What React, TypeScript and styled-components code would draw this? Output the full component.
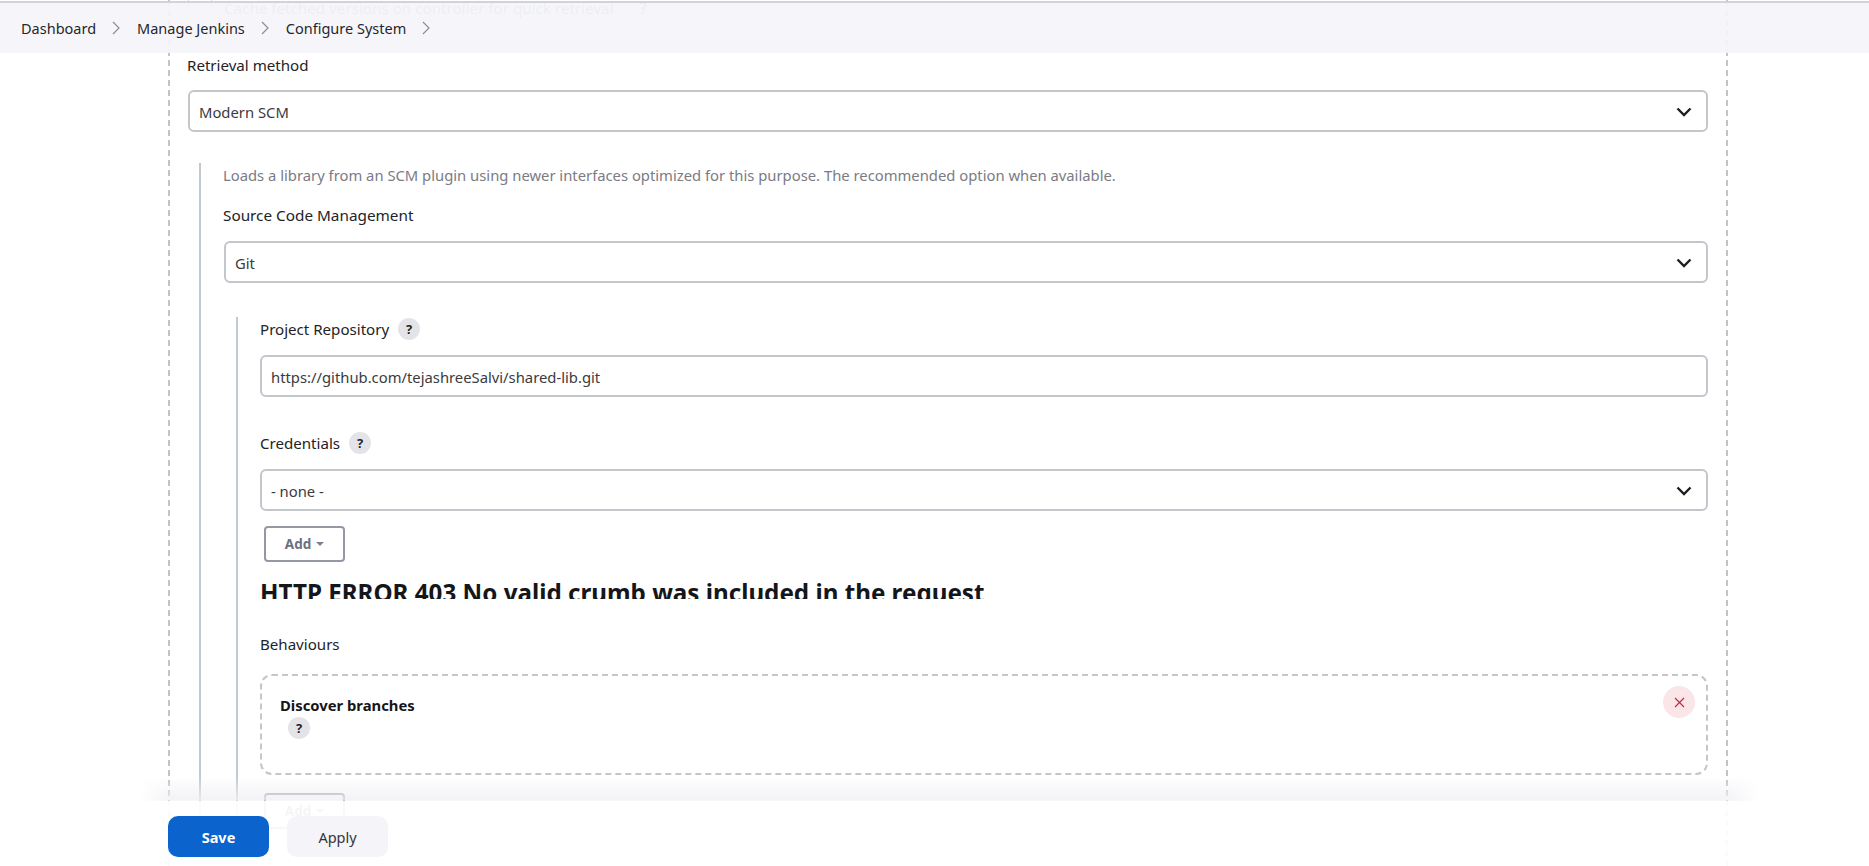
import React from "react";
import styled, { createGlobalStyle } from "styled-components";

const Global = createGlobalStyle`
  html, body { margin: 0; padding: 0; background: #fff; }
  body { font-family: "Noto Sans", "Open Sans", sans-serif; font-size: 14.8px; color: #1f2024; }
  * { box-sizing: border-box; }
`;

const Page = styled.div`
  position: relative;
  height: 866px;
  overflow: hidden;
  background: #fff;
`;

const Breadcrumbs = styled.nav`
  position: absolute;
  inset: 0 0 auto 0;
  height: 52px;
  display: flex;
  align-items: center;
  padding: 0 0 0 21px;
  border-top: 2px solid #d2d2da;
  margin-top: 1px;
  background: rgba(245, 245, 250, 0.93);
  z-index: 3;
`;

const Crumb = styled.span`
  font-size: 14.5px;
  color: #26272c;
  white-space: nowrap;
`;

const CrumbSep = styled.svg`
  width: 8px;
  height: 14px;
  margin: 0 17px 0 16px;
  fill: none;
  stroke: #8c8c94;
  stroke-width: 1.2;
`;

const Frame = styled.main`
  margin: 0 141px 0 168px;
  padding: 0 18px;
  height: 866px;
  border-left: 2px dashed #c4c4c8;
  border-right: 2px dashed #c4c4c8;
`;

const CacheRow = styled.div`
  height: 54px;
  display: flex;
  align-items: flex-start;
  gap: 12px;
  padding-top: 1px;
  font-size: 15.2px;
  line-height: 14px;
  color: #85858d;
`;

const CacheBox = styled.span`
  flex: none;
  width: 24px;
  height: 24px;
  margin-top: -13px;
  border: 1px solid #d6d8db;
  border-radius: 4px;
`;

const CacheHelp = styled.span`
  margin-left: 14px;
  font-weight: 700;
`;

const Label = styled.div`
  font-size: 15.1px;
  line-height: 20px;
  color: #222328;
  display: flex;
  align-items: center;
  gap: 9px;
`;

const RetrievalLabel = styled(Label)`
  margin-bottom: 14px;
  margin-left: -1px;
  height: 22px;
`;

const Select = styled.div`
  height: 42px;
  display: flex;
  align-items: center;
  justify-content: space-between;
  padding: 1px 14px 0 9px;
  border: 2px solid #c3c6ca;
  border-radius: 6px;
  font-size: 14.8px;
  color: #3a3b40;
  background: #fff;
`;

const Chevron = styled.svg`
  width: 16px;
  height: 10px;
  fill: none;
  stroke: #1e1f24;
  stroke-width: 2.4;
`;

const Nested = styled.section<{ $indent: number; $pad: number; $top: number }>`
  margin: ${(p) => p.$top}px 0 0 ${(p) => p.$indent}px;
  padding-left: ${(p) => p.$pad}px;
  border-left: 2px solid #c2cad0;
`;

const Description = styled.div`
  font-size: 14.8px;
  line-height: 20px;
  padding-top: 2px;
  margin-left: -1px;
  color: #7b7b85;
  margin-bottom: 21px;
  white-space: nowrap;
`;

const ScmLabel = styled(Label)`
  margin: -1px 0 16px -1px;
  font-size: 15.3px;
`;

const RepoGroup = styled.div`
  margin-bottom: 34px;
`;

const HelpLabel = styled(Label)`
  height: 24px;
  margin-bottom: 14px;
`;

const Help = styled.span`
  flex: none;
  width: 22px;
  height: 22px;
  border-radius: 50%;
  background: #e4e4e8;
  color: #24252a;
  font-size: 13px;
  font-weight: 700;
  display: inline-flex;
  align-items: center;
  justify-content: center;
`;

const TextInput = styled.input`
  display: block;
  width: 100%;
  height: 42px;
  padding: 1px 9px 0;
  border: 2px solid #c3c6ca;
  border-radius: 6px;
  font: 14.8px "Noto Sans", sans-serif;
  color: #3a3b40;
  background: #fff;
  outline: none;
`;

const AddButton = styled.button`
  display: flex;
  align-items: center;
  justify-content: center;
  gap: 5px;
  width: 81px;
  height: 36px;
  margin: 15px 0 0 4px;
  padding: 0;
  border: 2px solid #9498a6;
  border-radius: 4px;
  background: #fff;
  font: 700 13.5px "Noto Sans", sans-serif;
  color: #6c6f80;
`;

const Caret = styled.span`
  width: 0;
  height: 0;
  border-left: 4px solid transparent;
  border-right: 4px solid transparent;
  border-top: 4px solid #7d8093;
`;

const ErrorClip = styled.div`
  height: 37px;
  overflow: hidden;
`;

const ErrorHeading = styled.h2`
  margin: 15px 0 0;
  font-size: 24.2px;
  line-height: 32px;
  font-weight: 700;
  color: #15161a;
  white-space: nowrap;
`;

const BehavioursLabel = styled(Label)`
  margin: 35px 0 20px;
`;

const BehaviourCard = styled.div`
  height: 101px;
  display: flex;
  justify-content: space-between;
  padding: 10px 11px 0 18px;
  border: 2px dashed #c6c6ca;
  border-radius: 12px;
  background: #fff;
`;

const BehaviourInfo = styled.div`
  display: flex;
  flex-direction: column;
  align-items: flex-start;
  padding-top: 9px;
`;

const BehaviourName = styled.div`
  font-size: 14.8px;
  line-height: 20px;
  font-weight: 700;
  color: #15161a;
`;

const CardHelp = styled(Help)`
  margin: 2px 0 0 8px;
`;

const Remove = styled.button`
  flex: none;
  width: 32px;
  height: 32px;
  padding: 0;
  border: 0;
  border-radius: 50%;
  background: #fae6e8;
  display: flex;
  align-items: center;
  justify-content: center;
`;

const RemoveIcon = styled.svg`
  width: 11px;
  height: 11px;
  stroke: #c22b40;
  stroke-width: 1.2;
  fill: none;
`;

const SecondAdd = styled(AddButton)`
  margin: 18px 0 0 4px;
`;

const BottomBar = styled.footer`
  position: absolute;
  inset: 801px 0 0 0;
  display: flex;
  align-items: flex-start;
  gap: 18px;
  padding: 15px 0 0 168px;
  background: rgba(255, 255, 255, 0.93);
  z-index: 2;
`;

const BarShadow = styled.div`
  position: absolute;
  left: 140px;
  top: -24px;
  width: 1620px;
  height: 24px;
  background: linear-gradient(to bottom, rgba(240, 240, 245, 0), rgba(240, 240, 245, 0.85));
  filter: blur(1px);
  mask-image: linear-gradient(to right, transparent, #000 30px, #000 1590px, transparent);
`;

const ActionButton = styled.button<{ $primary?: boolean }>`
  width: 101px;
  height: 41px;
  padding: 0;
  border: 0;
  border-radius: 10px;
  font: ${(p) => (p.$primary ? 700 : 400)} 14.5px "Noto Sans", sans-serif;
  color: ${(p) => (p.$primary ? "#fff" : "#33343a")};
  background: ${(p) => (p.$primary ? "#0b63ce" : "#f5f5f9")};
`;

const Sep = () => (
  <CrumbSep viewBox="0 0 8 14">
    <path d="M1 1l6 6-6 6" />
  </CrumbSep>
);

const Arrow = () => (
  <Chevron viewBox="0 0 16 10">
    <path d="M1.5 1.5L8 8l6.5-6.5" />
  </Chevron>
);

export default function App() {
  return (
    <Page>
      <Global />
      <Breadcrumbs>
        <Crumb>Dashboard</Crumb>
        <Sep />
        <Crumb>Manage Jenkins</Crumb>
        <Sep />
        <Crumb>Configure System</Crumb>
        <Sep />
      </Breadcrumbs>
      <Frame>
        <CacheRow>
          <CacheBox />
          Cache fetched versions on controller for quick retrieval
          <CacheHelp>?</CacheHelp>
        </CacheRow>
        <RetrievalLabel>Retrieval method</RetrievalLabel>
        <Select>
          Modern SCM
          <Arrow />
        </Select>
        <Nested $indent={11} $pad={23} $top={31}>
          <Description>
            Loads a library from an SCM plugin using newer interfaces optimized for this purpose. The
            recommended option when available.
          </Description>
          <ScmLabel>Source Code Management</ScmLabel>
          <Select>
            Git
            <Arrow />
          </Select>
          <Nested $indent={12} $pad={22} $top={34}>
            <RepoGroup>
              <HelpLabel>
                Project Repository <Help>?</Help>
              </HelpLabel>
              <TextInput readOnly value="https://github.com/tejashreeSalvi/shared-lib.git" />
            </RepoGroup>
            <HelpLabel>
              Credentials <Help>?</Help>
            </HelpLabel>
            <Select>
              - none -
              <Arrow />
            </Select>
            <AddButton>
              Add <Caret />
            </AddButton>
            <ErrorClip>
              <ErrorHeading>HTTP ERROR 403 No valid crumb was included in the request</ErrorHeading>
            </ErrorClip>
            <BehavioursLabel>Behaviours</BehavioursLabel>
            <BehaviourCard>
              <BehaviourInfo>
                <BehaviourName>Discover branches</BehaviourName>
                <CardHelp>?</CardHelp>
              </BehaviourInfo>
              <Remove aria-label="Remove">
                <RemoveIcon viewBox="0 0 11 11">
                  <path d="M1 1l9 9M10 1l-9 9" />
                </RemoveIcon>
              </Remove>
            </BehaviourCard>
            <SecondAdd>
              Add <Caret />
            </SecondAdd>
          </Nested>
        </Nested>
      </Frame>
      <BottomBar>
        <BarShadow />
        <ActionButton $primary>Save</ActionButton>
        <ActionButton>Apply</ActionButton>
      </BottomBar>
    </Page>
  );
}
